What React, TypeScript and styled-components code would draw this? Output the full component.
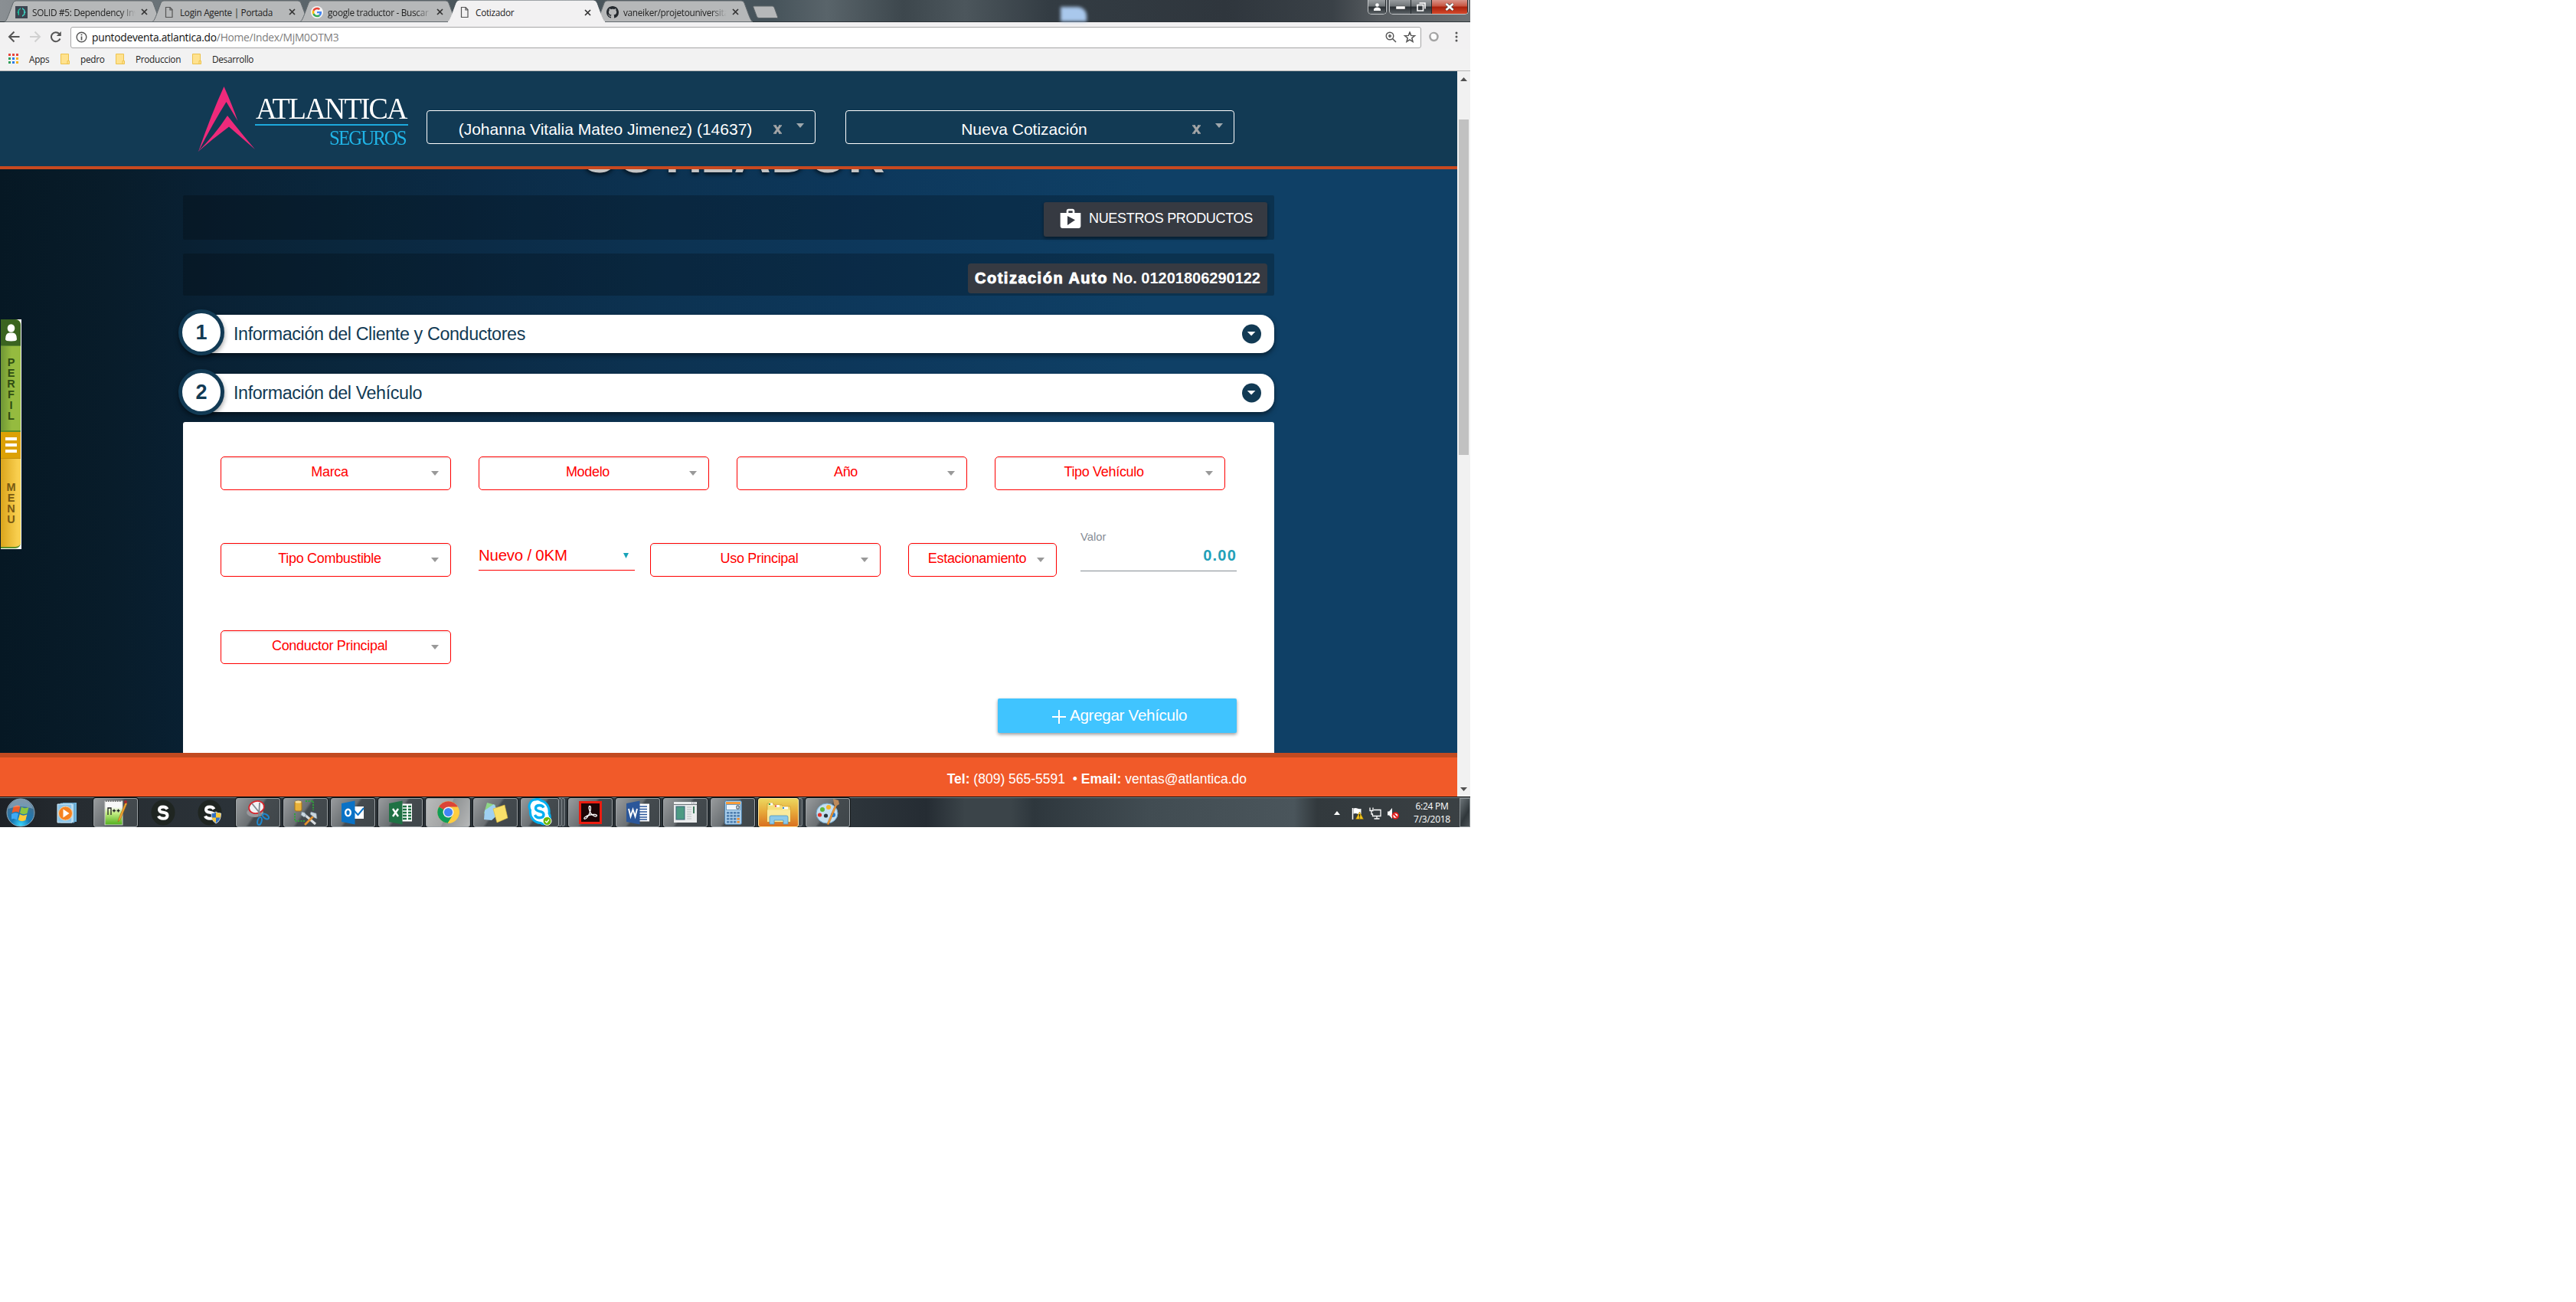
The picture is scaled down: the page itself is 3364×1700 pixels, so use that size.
import React from "react";
import styled, { createGlobalStyle } from "styled-components";

const sans = `"Liberation Sans", Arial, sans-serif`;
const ui = `"Open Sans", "Noto Sans", sans-serif`;

const Global = createGlobalStyle`
  * { box-sizing: border-box; }
  body { margin: 0; background: #fff; font-family: ${sans}; }
  svg { display: block; flex: none; }
`;

const Desktop = styled.div`
  width: 1920px;
  height: 1080px;
  display: flex;
  flex-direction: column;
  overflow: hidden;
  position: relative;
`;

/* ---------- browser chrome ---------- */

const TabStrip = styled.div`
  height: 29px;
  display: flex;
  padding-left: 6px;
  position: relative;
  border-bottom: 1px solid #2c3338;
  background: linear-gradient(90deg, #8a8f93 0, #6a7378 200px, #4b565c 600px, #47545b 1010px, #59646a 1080px, #3d474d 1180px, #4c565c 1260px, #333c43 1370px, #2f363d 1600px, #3a4147 1740px, #575c60 1800px, #6b7073 1920px);
`;

const TabBox = styled.div<{ $active?: boolean }>`
  width: 205px;
  height: ${(p) => (p.$active ? 29 : 28)}px;
  margin-right: -12px;
  position: relative;
  z-index: ${(p) => (p.$active ? 2 : 1)};
  display: flex;
  align-items: center;
  padding: 3px 18px 0 14px;
`;

const TabShape = styled.svg`
  position: absolute;
  left: 0;
  top: 0;
`;

const TabIcon = styled.div`
  width: 22px;
  display: flex;
  position: relative;
`;

const TabTitle = styled.div<{ $fade?: boolean }>`
  flex: 1;
  position: relative;
  font: 11.8px ${ui};
  letter-spacing: -0.3px;
  white-space: nowrap;
  overflow: hidden;
  color: #222;
  ${(p) => (p.$fade ? "-webkit-mask-image: linear-gradient(90deg, #000 85%, transparent);" : "")}
`;

const TabClose = styled.svg`
  position: relative;
  margin-left: 7px;
`;

const NewTab = styled.svg`
  margin: 7px 0 0 12px;
`;

const DesktopGlow = styled.div`
  position: absolute;
  left: 1385px;
  top: 9px;
  width: 34px;
  height: 19px;
  border-top-right-radius: 12px;
  background: #a9c8ec;
  filter: blur(2px);
`;

const WindowButtons = styled.div`
  position: absolute;
  right: 2px;
  top: 0;
  display: flex;
`;

const WinGroup = styled.div`
  display: flex;
  height: 19px;
  margin-left: 3px;
  border: 1px solid #c3c6c8;
  border-top: 0;
  border-radius: 0 0 5px 5px;
  overflow: hidden;
`;

const WinButton = styled.div<{ $w: number; $red?: boolean }>`
  width: ${(p) => p.$w}px;
  display: flex;
  align-items: center;
  justify-content: center;
  border-right: 1px solid #22282c;
  background: ${(p) =>
    p.$red
      ? "linear-gradient(#d8948a 0, #c75440 45%, #a8200c 50%, #d3482a 100%)"
      : "linear-gradient(#989c9f 0, #6f7477 45%, #2b3034 50%, #5a6064 100%)"};
`;

const Toolbar = styled.div`
  height: 35px;
  background: #f2f1f2;
  display: flex;
  align-items: center;
  padding: 2px 10px 0 10px;
`;

const NavIcon = styled.svg`
  margin-right: 12px;
`;

const Omnibox = styled.div`
  width: 1765px;
  height: 28px;
  margin: 2px 10px 0 0;
  border: 1px solid #a6a6a6;
  border-radius: 3px;
  background: #fff;
  display: flex;
  align-items: center;
  padding: 0 0 0 6px;
`;

const Url = styled.div`
  flex: 1;
  margin-left: 6px;
  font: 13.8px ${ui};
  letter-spacing: -0.26px;
  color: #7d7d7d;
  b { font-weight: 400; color: #111; }
`;

const Bookmarks = styled.div`
  height: 29px;
  background: #f2f2f2;
  border-bottom: 1px solid #b4b4b4;
  display: flex;
  align-items: center;
  padding: 0 11px 3px;
  font: 11.8px ${ui};
  letter-spacing: -0.3px;
  color: #222;
`;

const Bookmark = styled.div<{ $w: number }>`
  width: ${(p) => p.$w}px;
  display: flex;
  align-items: center;
  gap: 14px;
`;

/* ---------- page ---------- */

const Viewport = styled.div`
  height: 947px;
  display: flex;
`;

const Site = styled.div`
  width: 1903px;
  display: flex;
  flex-direction: column;
  position: relative;
  background: linear-gradient(90deg, #061824 0, #081c2a 140px, #092134 270px, #0a273d 450px, #0b2b46 620px, #0c3251 850px, #0d385c 1150px, #0e3c61 1330px, #0f4066 1500px, #0f4066 100%);
`;

const Header = styled.header`
  height: 128px;
  flex: none;
  background: #123a54;
  border-bottom: 4px solid #c8491f;
  display: flex;
  padding-left: 258px;
`;

const Brand = styled.div`
  width: 299px;
  display: flex;
  padding-top: 20px;
`;

const BrandText = styled.div`
  width: 200px;
  display: flex;
  flex-direction: column;
  align-items: flex-end;
  font-family: "Liberation Serif", serif;
  white-space: nowrap;
`;

const BrandName = styled.div`
  font-size: 39px;
  line-height: 36px;
  margin-top: 11px;
  letter-spacing: -1.9px;
  margin-right: 2px;
  transform: scaleX(0.975);
  transform-origin: 100% 50%;
  color: #fff;
`;

const BrandRule = styled.div`
  width: 200px;
  height: 2px;
  margin-top: 2px;
  background: #1ca9dc;
`;

const BrandSub = styled.div`
  font-size: 27.5px;
  line-height: 28px;
  margin-top: 2px;
  margin-right: 3px;
  letter-spacing: -2.1px;
  transform: scaleX(0.9);
  transform-origin: 100% 50%;
  color: #20b5e8;
`;

const HeaderSelect = styled.div`
  width: 508px;
  height: 44px;
  margin: 51px 39px 0 0;
  border: 1px solid #fff;
  border-radius: 4px;
  display: flex;
  align-items: center;
  color: #fff;
  font-size: 21px;
  padding: 5px 14px 0 0;
`;

const SelectLabel = styled.div<{ $shift: number }>`
  flex: 1;
  text-align: center;
  white-space: nowrap;
  padding-left: ${(p) => p.$shift}px;
`;

const Clear = styled.svg`
  margin: 1px 19px 0 0;
`;

const HeaderCaret = styled.svg`
  margin-bottom: 9px;
`;

const Body = styled.main`
  height: 762px;
  padding: 0 239px;
  display: flex;
  flex-direction: column;
  overflow: hidden;
`;

const TitleClip = styled.div`
  height: 34px;
  flex: none;
  overflow: hidden;
  display: flex;
  justify-content: center;
  align-items: flex-start;
`;

const Title = styled.h1`
  margin: -54px 0 0 10px;
  font-size: 66.5px;
  letter-spacing: 0.4px;
  line-height: 70px;
  color: #c4c4c4;
  text-shadow: 0 3px 5px rgba(0, 0, 0, 0.6);
`;

const Strip = styled.div<{ $h: number; $gap: number }>`
  width: 1425px;
  height: ${(p) => p.$h}px;
  margin-bottom: ${(p) => p.$gap}px;
  flex: none;
  border-radius: 2px;
  background: rgba(0, 0, 0, 0.22);
  display: flex;
  justify-content: flex-end;
  padding-right: 9px;
`;

const ProductsButton = styled.div`
  width: 292px;
  height: 45px;
  margin-top: 9px;
  border-radius: 3px;
  background: #363a42;
  box-shadow: 0 2px 4px rgba(0, 0, 0, 0.45);
  color: #fff;
  font-size: 18px;
  letter-spacing: -0.32px;
  display: flex;
  align-items: center;
  padding: 0 0 2px 19px;
  gap: 8px;
  white-space: nowrap;
`;

const QuoteBadge = styled.div`
  width: 391px;
  height: 39px;
  margin-top: 13px;
  border-radius: 4px;
  background: #363a42;
  color: #fff;
  font-weight: 700;
  font-size: 20px;
  line-height: 39px;
  display: flex;
  justify-content: space-between;
  padding: 0 9px;
  white-space: nowrap;
`;

const Heavy = styled.span`
  -webkit-text-stroke: 0.9px #fff;
  letter-spacing: 1.5px;
`;

const Section = styled.div<{ $gap: number }>`
  width: 1425px;
  height: 50px;
  flex: none;
  margin-bottom: ${(p) => p.$gap}px;
  border-radius: 25px 18px 18px 25px;
  background: #fff;
  box-shadow: 0 3px 6px rgba(0, 0, 0, 0.5);
  display: flex;
  align-items: center;
  padding-right: 17px;
`;

const Step = styled.div<{ $drop: number }>`
  width: 60px;
  height: 60px;
  flex: none;
  margin: ${(p) => p.$drop}px 12px 0 -6px;
  border: 5px solid #123a54;
  border-radius: 50%;
  background: #fff;
  box-shadow: 0 3px 6px rgba(0, 0, 0, 0.4);
  color: #123a54;
  font-weight: 700;
  font-size: 27px;
  line-height: 50px;
  text-align: center;
`;

const SectionTitle = styled.div`
  flex: 1;
  font-size: 23.3px;
  letter-spacing: -0.38px;
  color: #123a54;
  padding-top: 1px;
`;

const Panel = styled.div`
  width: 1425px;
  height: 460px;
  flex: none;
  background: #fff;
  border-radius: 3px 3px 0 0;
  padding: 45px 49px 0 49px;
`;

const Row = styled.div<{ $h: number }>`
  display: flex;
  height: ${(p) => p.$h}px;
`;

const Picker = styled.div<{ $w: number; $gap: number }>`
  width: ${(p) => p.$w}px;
  height: 44px;
  margin-right: ${(p) => p.$gap}px;
  flex: none;
  border: 1px solid #f00;
  border-radius: 5px;
  box-shadow: inset 0 2px 2px rgba(0, 0, 0, 0.06);
  color: #f00;
  font-size: 18px;
  letter-spacing: -0.32px;
  display: flex;
  align-items: center;
  padding-right: 15px;
`;

const PickerLabel = styled.div<{ $tight?: boolean }>`
  flex: 1;
  text-align: center;
  white-space: nowrap;
  padding: 0 0 4px ${(p) => (p.$tight ? 11 : 9)}px;
`;

const Native = styled.div`
  width: 204px;
  height: 36px;
  margin-right: 20px;
  flex: none;
  border-bottom: 1px solid #f00;
  color: #f00;
  font-size: 20.4px;
  letter-spacing: -0.2px;
  display: flex;
  align-items: center;
  justify-content: space-between;
  padding: 0 8px 2px 0;
`;

const Value = styled.div`
  width: 204px;
  height: 54px;
  margin: -17px 0 0 31px;
  flex: none;
  border-bottom: 1px solid #858c94;
  display: flex;
  flex-direction: column;
`;

const ValueLabel = styled.div`
  font-size: 14.8px;
  line-height: 18px;
  color: #868d95;
`;

const ValueText = styled.div`
  font-size: 20px;
  font-weight: 700;
  letter-spacing: 1.2px;
  line-height: 24px;
  margin-top: 3px;
  text-align: right;
  color: #23a0b8;
`;

const AddButton = styled.div`
  width: 312px;
  height: 45px;
  margin: -24px 0 0 1015px;
  border-radius: 2px;
  background: #40c4ff;
  box-shadow: 0 2px 4px rgba(0, 0, 0, 0.4);
  color: #fff;
  font-size: 20.6px;
  letter-spacing: -0.3px;
  display: flex;
  align-items: center;
  padding: 0 0 2px 71px;
  gap: 5px;
  svg { margin-top: 4px; }
`;

const Footer = styled.footer`
  height: 57px;
  flex: none;
  border-top: 6px solid #c24a20;
  background: #f15a29;
  color: #fff;
  font-size: 17.5px;
  display: flex;
  align-items: center;
  justify-content: flex-end;
  padding: 5px 275px 0 0;
  white-space: pre;
`;

const ScrollBar = styled.div`
  width: 17px;
  height: 947px;
  background: #f1f1f1;
  display: flex;
  flex-direction: column;
  align-items: center;
  padding: 7px 0;
`;

const Thumb = styled.div`
  width: 13px;
  height: 438px;
  margin: 50px 0 auto;
  background: #c1c1c1;
`;

/* ---------- floating side tabs ---------- */

const SideTabs = styled.div`
  position: absolute;
  left: 1px;
  top: 417px;
  width: 27px;
  height: 300px;
  background: #fff;
`;

const SideTab = styled.div<{ $h: number; $yellow?: boolean }>`
  width: 26px;
  height: ${(p) => p.$h}px;
  display: flex;
  flex-direction: column;
  align-items: center;
  overflow: hidden;
  border-radius: ${(p) => (p.$yellow ? "0 0 7px 0" : "0 7px 0 0")};
  border-bottom: 2px solid #5a8f2c;
  background: ${(p) =>
    p.$yellow ? "linear-gradient(90deg, #dba51c, #f9cf4f 85%)" : "linear-gradient(90deg, #6f9635, #95bb3f 55%)"};
`;

const SideHead = styled.div<{ $yellow?: boolean }>`
  width: 100%;
  height: 35px;
  flex: none;
  display: flex;
  align-items: center;
  justify-content: center;
  background: ${(p) => (p.$yellow ? "#dca105" : "#3a6420")};
  border-bottom: 1px solid ${(p) => (p.$yellow ? "#c58f08" : "#5b8530")};
`;

const SideLetters = styled.div<{ $top: number; $c: string }>`
  padding: ${(p) => p.$top}px 0 0 1px;
  display: flex;
  flex-direction: column;
  align-items: center;
  font: 700 14.5px/14px ${sans};
  color: ${(p) => p.$c};
`;

/* ---------- taskbar ---------- */

const Taskbar = styled.div`
  height: 40px;
  flex: none;
  border-top: 1px solid #0a0c0d;
  box-shadow: inset 0 1px 0 #777e82;
  background: linear-gradient(90deg, #1d2126 0, #262c31 100px, #2b3238 300px, #2d353b 1110px, #252c33 1210px, #3b4449 1260px, #3b4449 1320px, #2e373d 1350px, #414c52 1500px, #4a555b 1690px, #32393d 1720px, #3b4144 1920px);
  display: flex;
  align-items: center;
`;

const Slot = styled.div<{ $w: number; $gap?: number }>`
  width: ${(p) => p.$w}px;
  height: 38px;
  margin-right: ${(p) => p.$gap ?? 0}px;
  flex: none;
  display: flex;
  align-items: center;
  justify-content: center;
`;

const TaskButton = styled(Slot)<{ $tone?: "light" | "gold" }>`
  border: 1px solid ${(p) => (p.$tone === "gold" ? "#ffe9a0" : "#9aa0a4")};
  border-radius: 3px;
  box-shadow: 0 0 0 1px #14181a;
  background: ${(p) =>
    p.$tone === "light"
      ? "linear-gradient(115deg, #b9bbbb 0, #a3a5a5 48%, #8e9192 50%, #b6b8b8 100%)"
      : p.$tone === "gold"
      ? "linear-gradient(#ecd75f 0, #e8ab3b 45%, #d9701f 100%)"
      : "linear-gradient(125deg, #989b9d 0, #6a6f72 45%, #454b4f 50%, #3f464a 100%)"};
`;

const Stack = styled.div<{ $w: number; $gap: number }>`
  width: ${(p) => p.$w}px;
  height: 37px;
  margin-right: ${(p) => p.$gap}px;
  flex: none;
  border: 1px solid #7d8488;
  border-left: 0;
  border-radius: 0 3px 3px 0;
  background: #4a5156;
`;

const Tray = styled.div`
  flex: 1;
  height: 39px;
  display: flex;
  align-items: center;
  justify-content: flex-end;
`;

const TrayIcons = styled.div`
  display: flex;
  align-items: center;
  gap: 7px;
  margin: 2px 7px 0 0;
`;

const TrayArrow = styled.svg`
  margin-right: 8px;
`;

const Clock = styled.div`
  width: 72px;
  display: flex;
  flex-direction: column;
  align-items: center;
  font: 12px/17px ${ui};
  letter-spacing: -0.25px;
  color: #fff;
`;

const ShowDesktop = styled.div`
  width: 14px;
  height: 38px;
  border: 1px solid #8c9396;
  background: linear-gradient(120deg, #6c7478, #30373b 60%, #4c5357);
`;

/* ---------- drawings ---------- */

const PageIcon = () => (
  <svg width="16" height="16" viewBox="0 0 16 16">
    <path d="M3.500 1.500h5.500l3 3v10h-8.500z M9 1.500v3.500h3" fill="none" stroke="#555" strokeWidth="1.200" />
  </svg>
);

const SolidIcon = () => (
  <svg width="16" height="16" viewBox="0 0 16 16">
    <rect width="16" height="16" fill="#3d4450" />
    <path d="M7 2L3.500 5v2L2 8l1.500 1v2L5 12.500V5.500L7 4z" fill="#1abc9c" />
    <path d="M9 2l3.500 3v2L14 8l-1.500 1v2L9 14v-2l2-1.500v-5L9 4z" fill="#3fd0c0" />
  </svg>
);

const GoogleIcon = () => (
  <svg width="16" height="16" viewBox="0 0 48 48">
    <circle cx="24" cy="24" r="24" fill="#f4f4f4" />
    <g transform="translate(5 5) scale(.79)">
      <path fill="#EA4335" d="M24 9.500c3.540 0 6.710 1.220 9.210 3.600l6.850-6.850C35.900 2.380 30.470 0 24 0 14.620 0 6.510 5.380 2.560 13.220l7.980 6.190C12.430 13.720 17.740 9.500 24 9.500z" />
      <path fill="#4285F4" d="M46.980 24.550c0-1.570-.15-3.090-.38-4.550H24v9.020h12.940c-.58 2.960-2.260 5.480-4.780 7.180l7.730 6c4.510-4.180 7.090-10.360 7.090-17.650z" />
      <path fill="#FBBC05" d="M10.530 28.590c-.48-1.450-.76-2.990-.76-4.590s.27-3.140.76-4.590l-7.980-6.190C.92 16.460 0 20.120 0 24s.92 7.540 2.560 10.780l7.970-6.190z" />
      <path fill="#34A853" d="M24 48c6.480 0 11.930-2.130 15.890-5.810l-7.730-6c-2.150 1.450-4.920 2.300-8.160 2.300-6.260 0-11.570-4.220-13.470-9.910l-7.980 6.190C6.510 42.620 14.620 48 24 48z" />
    </g>
  </svg>
);

const GithubIcon = () => (
  <svg width="16" height="16" viewBox="0 0 16 16">
    <path fill="#24292e" d="M8 0C3.580 0 0 3.580 0 8c0 3.540 2.290 6.530 5.470 7.590.4.070.55-.17.55-.38 0-.19-.01-.82-.01-1.490-2.010.37-2.530-.49-2.690-.94-.09-.23-.48-.94-.82-1.130-.28-.15-.68-.52-.01-.53.63-.01 1.080.58 1.230.82.72 1.210 1.870.87 2.330.66.070-.52.28-.87.51-1.070-1.780-.2-3.640-.89-3.640-3.950 0-.87.31-1.590.82-2.150-.08-.2-.36-1.020.08-2.120 0 0 .67-.21 2.200.82.64-.18 1.320-.27 2-.27s1.360.09 2 .27c1.530-1.040 2.200-.82 2.200-.82.44 1.100.16 1.920.08 2.120.51.56.82 1.270.82 2.150 0 3.070-1.870 3.750-3.650 3.950.29.25.54.73.54 1.480 0 1.070-.01 1.930-.01 2.200 0 .21.15.46.55.38A8.010 8.010 0 0016 8c0-4.420-3.580-8-8-8z" />
  </svg>
);

const Caret = ({ w = 10, h = 6, c = "#999" }: { w?: number; h?: number; c?: string }) => (
  <svg width={w} height={h} viewBox="0 0 10 6" preserveAspectRatio="none">
    <path d="M0 0h10L5 6z" fill={c} />
  </svg>
);

const Folder = () => (
  <svg width="12" height="14" viewBox="0 0 12 14">
    <path d="M.5.5h10v9h1v4H.5z" fill="#ffe28f" stroke="#edc24d" />
    <path d="M9 13.500v-4h1.500" fill="none" stroke="#edc24d" />
  </svg>
);

const AppsGrid = () => (
  <svg width="13" height="13" viewBox="0 0 13 13">
    {["#e8453c", "#e8453c", "#e8453c", "#2f9e58", "#2b7de9", "#f2b01e", "#2f9e58", "#2b7de9", "#f2b01e"].map((c, i) => (
      <rect key={i} x={(i % 3) * 5} y={Math.floor(i / 3) * 5} width="3" height="3" fill={c} />
    ))}
  </svg>
);

const Chevron = () => (
  <svg width="25" height="26" viewBox="0 0 25 26">
    <ellipse cx="12.500" cy="13" rx="12.500" ry="12.500" fill="#123a54" />
    <path d="M6.800 10h10.600l-5.300 5.500z" fill="#fff" />
  </svg>
);

const Shop = () => (
  <svg width="32" height="32" viewBox="0 0 24 24">
    <path d="M16 6V4c0-1.110-.89-2-2-2h-4c-1.110 0-2 .89-2 2v2H2v13c0 1.110.89 2 2 2h16c1.110 0 2-.89 2-2V6h-6zm-6-2h4v2h-4V4zM9 18V9l7.500 4L9 18z" fill="#fff" />
  </svg>
);

const Tab = ({ icon, title, active, fade }: { icon: React.ReactNode; title: string; active?: boolean; fade?: boolean }) => (
  <TabBox $active={active}>
    <TabShape width="205" height="29" viewBox="0 0 205 29">
      <path
        d="M0 28.500C3 27 5 20 11 4Q12 1 15 1H190Q193 1 194 4C200 20 202 27 205 28.500z"
        fill={active ? "#f2f1f2" : "#b6b8b9"}
        stroke={active ? "#f2f1f2" : "#62696d"}
      />
    </TabShape>
    <TabIcon>{icon}</TabIcon>
    <TabTitle $fade={fade}>{title}</TabTitle>
    <TabClose width="9" height="9" viewBox="0 0 9 9">
      <path d="M1 1l7 7M8 1L1 8" stroke="#333" strokeWidth="1.700" />
    </TabClose>
  </TabBox>
);

const Field = ({ label, w = 301, gap = 36, tight }: { label: string; w?: number; gap?: number; tight?: boolean }) => (
  <Picker $w={w} $gap={gap}>
    <PickerLabel $tight={tight}>{label}</PickerLabel>
    <Caret />
  </Picker>
);

const ClearMark = () => (
  <Clear width="11" height="12" viewBox="0 0 11 12">
    <path d="M2 1.200l7 9.600M9 1.200l-7 9.600" stroke="#a3a5a6" strokeWidth="3" />
    <path d="M0 1h4M7 1h4M0 11h4M7 11h4" stroke="#a3a5a6" strokeWidth="1.400" />
  </Clear>
);

const StartOrb = () => (
  <svg width="38" height="38" viewBox="0 0 38 38">
    <defs>
      <radialGradient id="orb" cx="50%" cy="95%" r="85%">
        <stop offset="0" stopColor="#39d8ff" />
        <stop offset=".4" stopColor="#1878b4" />
        <stop offset="1" stopColor="#4a6f8c" />
      </radialGradient>
    </defs>
    <circle cx="19" cy="19" r="18" fill="url(#orb)" stroke="#8fa9b9" />
    <path d="M9.500 11.500q5-3.500 9-.5l-2 8q-4-2.500-9 .5z" fill="#ef5a28" />
    <path d="M20 11.500q4 3 9.500.5l-2 8q-5 2.500-9.500-.5z" fill="#8cc63f" />
    <path d="M7 21q5-3 9-.5l-2 8q-3-2.500-7-1z" fill="#3fa9f5" />
    <path d="M17.800 21q4.500 3 9.500.5l-2 7.500q-5 2.500-9.500-.5z" fill="#fdc938" />
    <path d="M3 14a16.500 16.500 0 0132 0q-16-6-32 0z" fill="#fff" opacity=".28" />
  </svg>
);

const MediaPlayer = () => (
  <svg width="28" height="28" viewBox="0 0 28 28">
    <path d="M8 1h18v25H8z" fill="#6fb4dc" />
    <path d="M5 2h18v25H5z" fill="#a6d4ee" stroke="#5795bd" />
    <path d="M1 3h19v24H1z" fill="#8cc4e8" stroke="#d7edf8" />
    <circle cx="11.500" cy="15" r="9" fill="#f58220" stroke="#fbd0a0" />
    <path d="M8.500 9.500v11l8-5.500z" fill="#fff" />
  </svg>
);

const NotepadPlus = () => (
  <svg width="30" height="34" viewBox="0 0 30 34">
    <defs>
      <linearGradient id="note" x1="0" y1="0" x2="0" y2="1">
        <stop offset=".25" stopColor="#f8f8f8" />
        <stop offset=".5" stopColor="#c5ee84" />
        <stop offset="1" stopColor="#4fae1b" />
      </linearGradient>
    </defs>
    <rect x="1" y="2" width="23" height="31" fill="url(#note)" stroke="#c9ccc9" />
    <path d="M2 2h21" stroke="#555" strokeWidth="1.600" strokeDasharray="1.500 1.500" />
    <path d="M5 20v-9h4v9M11 14.500h4m-2-2v4M16.500 14.500h4m-2-2v4" fill="none" stroke="#222" strokeWidth="1.300" />
    <path d="M28 3L19 25l-1 4 3-2.500L30 5z" fill="#f2a431" stroke="#9c6216" strokeWidth=".6" />
    <circle cx="28" cy="3" r="2" fill="#a6282c" />
  </svg>
);

const SqlIcon = ({ shield }: { shield?: boolean }) => (
  <svg width="34" height="36" viewBox="0 0 34 36">
    <ellipse cx="17" cy="18" rx="15.500" ry="16.500" fill="#1f2521" />
    <path d="M22.500 13.500Q21 10.500 17 10.500q-5 0-5 3.700 0 3 5 3.600 5.500.6 5.500 3.900 0 4-5.500 4-4.700 0-6-3.200" fill="none" stroke="#fff" strokeWidth="4" />
    {shield && (
      <g>
        <path d="M19 19q4 0 6-2 2 2 6.500 2 0 10-6.500 13Q19 29 19 19z" fill="#2f6fc4" stroke="#d7dde2" />
        <path d="M25 17.500q2 1.500 6 1.500v5.500h-6zM19.500 24.500H25V31q-4-2-5.500-6.500z" fill="#f9c939" />
      </g>
    )}
  </svg>
);

const SnipIcon = () => (
  <svg width="32" height="34" viewBox="0 0 32 34">
    <ellipse cx="12" cy="17" rx="11" ry="6" fill="#98989c" />
    <ellipse cx="14" cy="10" rx="10" ry="8" transform="rotate(-15 14 10)" fill="#f3f3f5" stroke="#d8232a" strokeWidth="1.800" />
    <path d="M8 5l13 16M18 4l-1 18" stroke="#7f868d" strokeWidth="1.800" />
    <ellipse cx="26" cy="22" rx="4.500" ry="2.600" transform="rotate(35 26 22)" fill="none" stroke="#1e88cf" strokeWidth="1.900" />
    <ellipse cx="18" cy="28" rx="2.600" ry="5" transform="rotate(15 18 28)" fill="none" stroke="#1e88cf" strokeWidth="1.900" />
  </svg>
);

const DbTools = () => (
  <svg width="34" height="36" viewBox="0 0 34 36">
    <rect x="3" y="3" width="9" height="13" rx="2" fill="#e9b23a" stroke="#a8741a" />
    <ellipse cx="7.500" cy="4" rx="4" ry="1.500" fill="#fbe09a" />
    <path d="M17 3h10v12M3 19v10h13" fill="none" stroke="#2fa13a" strokeWidth="2" strokeDasharray="2 1.500" />
    <path d="M15 20l15 13" stroke="#d9dde0" strokeWidth="3" />
    <path d="M30 20L16 34" stroke="#e5922e" strokeWidth="2.600" />
    <path d="M12 17l4 1 2 4-3 2-4-3zM24 17l7 2 1 7-3-1-6-5z" fill="#c9d6df" stroke="#6d7f8b" strokeWidth=".6" />
  </svg>
);

const OfficeIcon = ({ kind }: { kind: "outlook" | "excel" | "word" }) => {
  const main = { outlook: "#0a72c6", excel: "#1f7244", word: "#2b579a" }[kind];
  return (
    <svg width="32" height="32" viewBox="0 0 32 32">
      {kind === "outlook" ? (
        <g>
          <rect x="15" y="8" width="15" height="16" fill="#fff" />
          <path d="M17.500 13.500l5 5.500 7.500-9" fill="none" stroke={main} strokeWidth="2" />
        </g>
      ) : (
        <rect x="15" y="4.500" width="16" height="23" fill="#fff" />
      )}
      {kind === "excel" && (
        <path d="M19 8h5m2 0h4M19 12h5m2 0h4M19 16h5m2 0h4M19 20h5m2 0h4M19 24h5m2 0h4" stroke={main} strokeWidth="2.400" />
      )}
      {kind === "word" && <path d="M18 8h10M18 11.500h10M18 15h10M18 18.500h10M18 22h10M18 25h10" stroke={main} strokeWidth="1.700" />}
      <path d="M1 4L18.500.5v31L1 28z" fill={main} />
      {kind === "outlook" && <ellipse cx="9.500" cy="16" rx="3.300" ry="4.300" fill="none" stroke="#fff" strokeWidth="2.400" />}
      {kind === "excel" && <path d="M6 11l7 10M13 11l-7 10" stroke="#fff" strokeWidth="2.400" />}
      {kind === "word" && <path d="M4 11l2.500 10L9.500 12l3 9L15 11" fill="none" stroke="#fff" strokeWidth="1.900" />}
    </svg>
  );
};

const ChromeIcon = () => (
  <svg width="31" height="31" viewBox="0 0 48 48">
    <circle cx="24" cy="24" r="22" fill="#ffcd40" />
    <path d="M24 24L4.950 13A22 22 0 0143.050 13z" fill="#db4437" />
    <path d="M24 24L4.950 13A22 22 0 0023 46l10.500-16.500z" fill="#0f9d58" />
    <path d="M24 13h19.050A22 22 0 0123 46l10.500-17z" fill="#ffcd40" />
    <circle cx="24" cy="24" r="10.800" fill="#f1f1f1" />
    <circle cx="24" cy="24" r="8.600" fill="#4285f4" />
  </svg>
);

const StickyNotes = () => (
  <svg width="34" height="30" viewBox="0 0 34 30">
    <path d="M6 2l11 3-3 13-12-2z" fill="#8fd686" />
    <path d="M3 12l12-8 7 12-10 9-10-1z" fill="#9fd0f2" />
    <path d="M14 10l15-5 4 17-14 6z" fill="#f9e06a" stroke="#d9b73a" strokeWidth=".6" />
  </svg>
);

const SkypeIcon = () => (
  <svg width="32" height="38" viewBox="0 0 32 38">
    <path d="M10 2a8 8 0 018 1.500A13.500 14.500 0 0128 20a8 9 0 01-11 12.500A13.500 14.500 0 013.500 16 8 9 0 0110 2z" fill="#fff" stroke="#00aff0" strokeWidth="3" />
    <path d="M21 12.500Q19.500 9.500 15.500 9.500q-5 0-5 3.800 0 3 5 4 5.500 1 5.500 4.200 0 4.200-5.500 4.200-4.500 0-6-3.700" fill="none" stroke="#00aff0" strokeWidth="3.400" />
    <circle cx="25.500" cy="30" r="5.500" fill="#6bb700" stroke="#fff" />
    <path d="M23 30l2 2 3-4" fill="none" stroke="#fff" strokeWidth="1.300" />
  </svg>
);

const AcrobatIcon = () => (
  <svg width="30" height="30" viewBox="0 0 30 30">
    <rect x="1.500" y="1.500" width="27" height="27" fill="#1c0506" stroke="#ec1c10" strokeWidth="3" />
    <path d="M14 6.500c2.200 0 1.500 5 .2 8.500-1.500 4-4.700 8.800-6.700 8.300-2.200-.7 1-4 7-5.300 5-1.100 9.300-.7 8.800 1.200-.6 1.800-4.700.3-7.300-2.700-2.500-2.900-4-9.800-2-10z" fill="none" stroke="#fff" strokeWidth="1.300" />
  </svg>
);

const WindowApp = () => (
  <svg width="30" height="27" viewBox="0 0 30 27">
    <rect width="30" height="27" fill="#e9ebec" />
    <path d="M0 3.500h30" stroke="#6b7377" />
    <rect x="3" y="6" width="11" height="17" fill="#4d9a83" stroke="#3b6378" />
    <path d="M17 7h6M17 10h6M17 13h6M17 16h6M17 19h6M17 22h6" stroke="#b9bdbf" />
    <path d="M26 6v9" stroke="#3f7a5f" strokeWidth="2" />
    <path d="M23 1.500h6" stroke="#667" strokeDasharray="1 1" />
  </svg>
);

const Calculator = () => (
  <svg width="23" height="32" viewBox="0 0 23 32">
    <rect x=".5" y=".5" width="22" height="31" rx="2" fill="#a9cdea" stroke="#4d7fa8" />
    <rect x="2" y="2" width="19" height="3" fill="#f59b3a" />
    <rect x="2.500" y="5.500" width="18" height="7" fill="#eef5fb" stroke="#6f9cc0" />
    <path d="M16 7h3v4h-3z" fill="none" stroke="#345" />
    {[0, 1, 2, 3].map((r) =>
      [0, 1, 2, 3].map((c) => (
        <rect key={`${r}${c}`} x={3 + c * 4.5} y={15 + r * 4} width="3.300" height="2.600" fill={c === 3 && r > 1 ? "#ee8b2d" : "#4f7fae"} />
      ))
    )}
  </svg>
);

const Explorer = () => (
  <svg width="34" height="32" viewBox="0 0 34 32">
    <path d="M2 4h8l1 2h10l1 2h10v20H2z" fill="#f6e07c" stroke="#c79a32" strokeWidth=".7" />
    <path d="M4 5h5M12 7.500h6M22 10h7" stroke="#fff" strokeWidth="3" />
    <path d="M5 4v2" stroke="#35a645" strokeWidth="2" />
    <path d="M13 6.500v2" stroke="#d8392b" strokeWidth="2" />
    <path d="M23 9v2" stroke="#2f86d8" strokeWidth="2" />
    <path d="M2 12.500h30V28H2z" fill="#faea9c" />
    <path d="M5 31v-9q0-2 2-2h20q2 0 2 2v9h-6v-5H11v5z" fill="#8cc9ea" stroke="#4e94bd" strokeWidth=".8" />
  </svg>
);

const PaintIcon = () => (
  <svg width="34" height="38" viewBox="0 0 34 38">
    <ellipse cx="16" cy="20" rx="14" ry="13" fill="#c5dff0" stroke="#6fa5c8" />
    <circle cx="10" cy="15" r="3" fill="#5cb63c" />
    <circle cx="18" cy="12" r="3" fill="#f4b52a" />
    <circle cx="6.500" cy="22" r="2.600" fill="#e3342c" />
    <circle cx="14.500" cy="23" r="2.600" fill="#27353d" />
    <circle cx="24" cy="22" r="3" fill="#2c7fd0" />
    <path d="M27 8l2 1-11 26-2-1z" fill="#f19a35" stroke="#a65d14" strokeWidth=".5" />
    <path d="M24 1l7 2 1 5-5 3-2-3z" fill="#bd8a5b" />
  </svg>
);

export default function App() {
  return (
    <>
      <Global />
      <Desktop>
        <TabStrip>
          <Tab icon={<SolidIcon />} title="SOLID #5: Dependency Inv" fade />
          <Tab icon={<PageIcon />} title="Login Agente | Portada" />
          <Tab icon={<GoogleIcon />} title="google traductor - Buscar" fade />
          <Tab icon={<PageIcon />} title="Cotizador" active />
          <Tab icon={<GithubIcon />} title="vaneiker/projetouniversita" fade />
          <NewTab width="34" height="17" viewBox="0 0 34 17">
            <path d="M1.500 1h24q2 0 2.700 2l4.300 12q.5 1.500-1 1.500H8q-2 0-2.700-2L.8 2.500Q.3 1 1.500 1z" fill="#b6b8b9" stroke="#5d6569" />
          </NewTab>
          <DesktopGlow />
          <WindowButtons>
            <WinGroup>
              <WinButton $w={23}>
                <svg width="9" height="10" viewBox="0 0 9 10">
                  <circle cx="4.500" cy="2.500" r="2.300" fill="#fff" />
                  <path d="M0 10V8q1-2.500 4.500-2.500T9 8v2z" fill="#fff" />
                </svg>
              </WinButton>
            </WinGroup>
            <WinGroup>
              <WinButton $w={28}>
                <svg width="12" height="5" viewBox="0 0 12 5">
                  <rect y="1" width="12" height="4" fill="#fff" stroke="#444" strokeWidth=".5" />
                </svg>
              </WinButton>
              <WinButton $w={27}>
                <svg width="12" height="12" viewBox="0 0 12 12">
                  <path d="M3.500 1h7.500v7.500M1 3.500h7.500V11H1z" fill="none" stroke="#fff" strokeWidth="1.600" />
                </svg>
              </WinButton>
              <WinButton $w={47} $red>
                <svg width="12" height="10" viewBox="0 0 12 10">
                  <path d="M1.500 1l9 8M10.500 1l-9 8" stroke="#444" strokeWidth="4" />
                  <path d="M1.500 1l9 8M10.500 1l-9 8" stroke="#fff" strokeWidth="2.600" />
                </svg>
              </WinButton>
            </WinGroup>
          </WindowButtons>
        </TabStrip>

        <Toolbar>
          <NavIcon width="16" height="16" viewBox="0 0 16 16">
            <path d="M15.500 8H2M8.500 1.500L2 8l6.500 6.500" fill="none" stroke="#555" strokeWidth="2" />
          </NavIcon>
          <NavIcon width="16" height="16" viewBox="0 0 16 16">
            <path d="M1 8h13M7.500 1.500L14 8l-6.500 6.500" fill="none" stroke="#d0d0d0" strokeWidth="2" />
          </NavIcon>
          <NavIcon width="14" height="16" viewBox="0 0 14 16">
            <path d="M12.500 10.500A6 6 0 1111.300 4" fill="none" stroke="#555" strokeWidth="2" />
            <path d="M13.800 1v6h-6z" fill="#555" />
          </NavIcon>
          <Omnibox>
            <svg width="15" height="15" viewBox="0 0 15 15">
              <circle cx="7.500" cy="7.500" r="6.300" fill="none" stroke="#555" strokeWidth="1.400" />
              <path d="M7.500 3.500v1.800M7.500 6.500v5" stroke="#555" strokeWidth="1.700" />
            </svg>
            <Url>
              <b>puntodeventa.atlantica.do</b>/Home/Index/MjM0OTM3
            </Url>
            <svg width="15" height="15" viewBox="0 0 15 15">
              <circle cx="6" cy="6" r="4.800" fill="none" stroke="#555" strokeWidth="1.400" />
              <path d="M6 3.800v4.400M3.800 6h4.400M9.500 9.500l4.500 4.500" stroke="#555" strokeWidth="1.500" />
            </svg>
            <svg width="31" height="15" viewBox="0 0 31 15">
              <path d="M17 1l1.700 4.400 4.800.3-3.700 3 1.200 4.700-4-2.600-4 2.600 1.200-4.700-3.700-3 4.800-.3z" fill="none" stroke="#555" strokeWidth="1.500" />
            </svg>
          </Omnibox>
          <svg width="44" height="14" viewBox="0 0 44 14">
            <circle cx="6.500" cy="7" r="5" fill="#fafafa" stroke="#a3a3a3" strokeWidth="2.500" />
            <circle cx="5.800" cy="6" r="3.200" fill="#fdfdfd" />
            <circle cx="36" cy="2" r="1.500" fill="#555" />
            <circle cx="36" cy="7" r="1.500" fill="#555" />
            <circle cx="36" cy="12" r="1.500" fill="#555" />
          </svg>
        </Toolbar>

        <Bookmarks>
          <Bookmark $w={68}>
            <AppsGrid />
            Apps
          </Bookmark>
          <Bookmark $w={72}>
            <Folder />
            pedro
          </Bookmark>
          <Bookmark $w={100}>
            <Folder />
            Produccion
          </Bookmark>
          <Bookmark $w={100}>
            <Folder />
            Desarrollo
          </Bookmark>
        </Bookmarks>

        <Viewport>
          <Site>
            <Header>
              <Brand>
                <svg width="75" height="86" viewBox="0 0 75 86">
                  <path d="M34.500 0Q46 26 52.500 45L37.500 20Q20 48 1 85Q18 36 34.500 0z" fill="#ee2a7b" />
                  <path d="M39 38Q58 62 75 82L41 52.500Q20 68 0 85.500Q22 64 39 38z" fill="#ee2a7b" />
                </svg>
                <BrandText>
                  <BrandName>ATLANTICA</BrandName>
                  <BrandRule />
                  <BrandSub>SEGUROS</BrandSub>
                </BrandText>
              </Brand>
              <HeaderSelect>
                <SelectLabel $shift={13}>(Johanna Vitalia Mateo Jimenez) (14637)</SelectLabel>
                <ClearMark />
                <HeaderCaret width="10" height="6" viewBox="0 0 10 6">
                  <path d="M0 0h10L5 6z" fill="#9fa8ad" />
                </HeaderCaret>
              </HeaderSelect>
              <HeaderSelect>
                <SelectLabel $shift={13}>Nueva Cotización</SelectLabel>
                <ClearMark />
                <HeaderCaret width="10" height="6" viewBox="0 0 10 6">
                  <path d="M0 0h10L5 6z" fill="#9fa8ad" />
                </HeaderCaret>
              </HeaderSelect>
            </Header>

            <Body>
              <TitleClip>
                <Title>COTIZADOR</Title>
              </TitleClip>
              <Strip $h={58} $gap={18}>
                <ProductsButton>
                  <Shop />
                  NUESTROS PRODUCTOS
                </ProductsButton>
              </Strip>
              <Strip $h={55} $gap={25}>
                <QuoteBadge>
                  <Heavy>Cotización Auto</Heavy>
                  <span>No. 01201806290122</span>
                </QuoteBadge>
              </Strip>
              <Section $gap={27}>
                <Step $drop={-4}>1</Step>
                <SectionTitle>Información del Cliente y Conductores</SectionTitle>
                <Chevron />
              </Section>
              <Section $gap={13}>
                <Step $drop={-2}>2</Step>
                <SectionTitle>Información del Vehículo</SectionTitle>
                <Chevron />
              </Section>
              <Panel>
                <Row $h={113}>
                  <Field label="Marca" />
                  <Field label="Modelo" />
                  <Field label="Año" />
                  <Field label="Tipo Vehículo" />
                </Row>
                <Row $h={114}>
                  <Field label="Tipo Combustible" />
                  <Native>
                    Nuevo / 0KM
                    <Caret w={7} h={7} c="#17a2b8" />
                  </Native>
                  <Field label="Uso Principal" />
                  <Field label="Estacionamiento" w={194} gap={0} tight />
                  <Value>
                    <ValueLabel>Valor</ValueLabel>
                    <ValueText>0.00</ValueText>
                  </Value>
                </Row>
                <Row $h={113}>
                  <Field label="Conductor Principal" />
                </Row>
                <AddButton>
                  <svg width="18" height="18" viewBox="0 0 18 18">
                    <path d="M0 9h18M9 0v18" stroke="#fff" strokeWidth="2" />
                  </svg>
                  Agregar Vehículo
                </AddButton>
              </Panel>
            </Body>

            <Footer>
              <b>Tel:</b> (809) 565-5591 {" • "}
              <b>Email:</b> ventas@atlantica.do
            </Footer>
          </Site>
          <ScrollBar>
            <svg width="9" height="6" viewBox="0 0 10 6" preserveAspectRatio="none">
              <path d="M0 6h10L5 1z" fill="#505050" />
            </svg>
            <Thumb />
            <Caret w={9} h={5} c="#505050" />
          </ScrollBar>
        </Viewport>

        <Taskbar>
          <Slot $w={54}>
            <StartOrb />
          </Slot>
          <Slot $w={68}>
            <MediaPlayer />
          </Slot>
          <TaskButton $w={58} $gap={4}>
            <NotepadPlus />
          </TaskButton>
          <Slot $w={58} $gap={3}>
            <SqlIcon />
          </Slot>
          <Slot $w={58} $gap={5}>
            <SqlIcon shield />
          </Slot>
          <TaskButton $w={58} $gap={4}>
            <SnipIcon />
          </TaskButton>
          <TaskButton $w={58} $gap={4}>
            <DbTools />
          </TaskButton>
          <TaskButton $w={58} $gap={4}>
            <OfficeIcon kind="outlook" />
          </TaskButton>
          <TaskButton $w={58} $gap={4}>
            <OfficeIcon kind="excel" />
          </TaskButton>
          <TaskButton $w={58} $gap={4} $tone="light">
            <ChromeIcon />
          </TaskButton>
          <TaskButton $w={58} $gap={4}>
            <StickyNotes />
          </TaskButton>
          <TaskButton $w={50} $gap={0}>
            <SkypeIcon />
          </TaskButton>
          <Stack $w={4} $gap={0} />
          <Stack $w={4} $gap={4} />
          <TaskButton $w={58} $gap={4}>
            <AcrobatIcon />
          </TaskButton>
          <TaskButton $w={58} $gap={4}>
            <OfficeIcon kind="word" />
          </TaskButton>
          <TaskButton $w={58} $gap={4}>
            <WindowApp />
          </TaskButton>
          <TaskButton $w={58} $gap={4}>
            <Calculator />
          </TaskButton>
          <TaskButton $w={53} $gap={0} $tone="gold">
            <Explorer />
          </TaskButton>
          <Stack $w={5} $gap={4} />
          <TaskButton $w={58}>
            <PaintIcon />
          </TaskButton>
          <Tray>
            <TrayIcons>
              <TrayArrow width="8" height="5" viewBox="0 0 8 5">
                <path d="M0 5h8L4 0z" fill="#fff" />
              </TrayArrow>
              <svg width="16" height="16" viewBox="0 0 16 16">
                <path d="M1.500 1v15" stroke="#fff" strokeWidth="1.500" />
                <path d="M2.500 1.500q3-1 5 0t5 .5v7q-3 .500-5-.5t-5 0z" fill="#fff" />
                <path d="M10.500 6l5 9.500h-10z" fill="#f5c518" stroke="#8a6d00" strokeWidth=".5" />
                <path d="M10.500 9v3.500M10.500 13.500v1" stroke="#222" strokeWidth="1.300" />
              </svg>
              <svg width="16" height="16" viewBox="0 0 16 16">
                <path d="M6 3.500h9v8H4.500v-3M10 12v2.500M6.500 15h7" fill="none" stroke="#fff" strokeWidth="1.300" />
                <path d="M1 .5v4h4v-4M3 4.500V9h2" fill="none" stroke="#fff" strokeWidth="1.300" />
              </svg>
              <svg width="16" height="16" viewBox="0 0 16 16">
                <path d="M1 5.500h2L7 1v14l-4-4.500H1z" fill="#fff" />
                <circle cx="11.300" cy="11" r="3.800" fill="#fff" stroke="#e01b1b" strokeWidth="1.900" />
                <path d="M8.800 8.500l5 5" stroke="#e01b1b" strokeWidth="1.800" />
              </svg>
            </TrayIcons>
            <Clock>
              <span>6:24 PM</span>
              <span>7/3/2018</span>
            </Clock>
            <ShowDesktop />
          </Tray>
        </Taskbar>

        <SideTabs>
          <SideTab $h={147}>
            <SideHead>
              <svg width="15" height="23" viewBox="0 0 15 23">
                <ellipse cx="7.500" cy="5.500" rx="4.800" ry="5.300" fill="#fff" />
                <path d="M0 20q0-8 5-8.500h5q5 .5 5 8.500 0 2.500-7.500 2.500T0 20z" fill="#fff" />
              </svg>
            </SideHead>
            <SideLetters $top={14} $c="#2f4d12">
              {"PERFIL".split("").map((c, i) => (
                <span key={i}>{c}</span>
              ))}
            </SideLetters>
          </SideTab>
          <SideTab $h={152} $yellow>
            <SideHead $yellow>
              <svg width="15" height="20" viewBox="0 0 15 20">
                <path d="M0 2h15M0 10h15M0 18h15" stroke="#fff" strokeWidth="4" />
              </svg>
            </SideHead>
            <SideLetters $top={30} $c="#7a5a12">
              {"MENU".split("").map((c, i) => (
                <span key={i}>{c}</span>
              ))}
            </SideLetters>
          </SideTab>
        </SideTabs>
      </Desktop>
    </>
  );
}
